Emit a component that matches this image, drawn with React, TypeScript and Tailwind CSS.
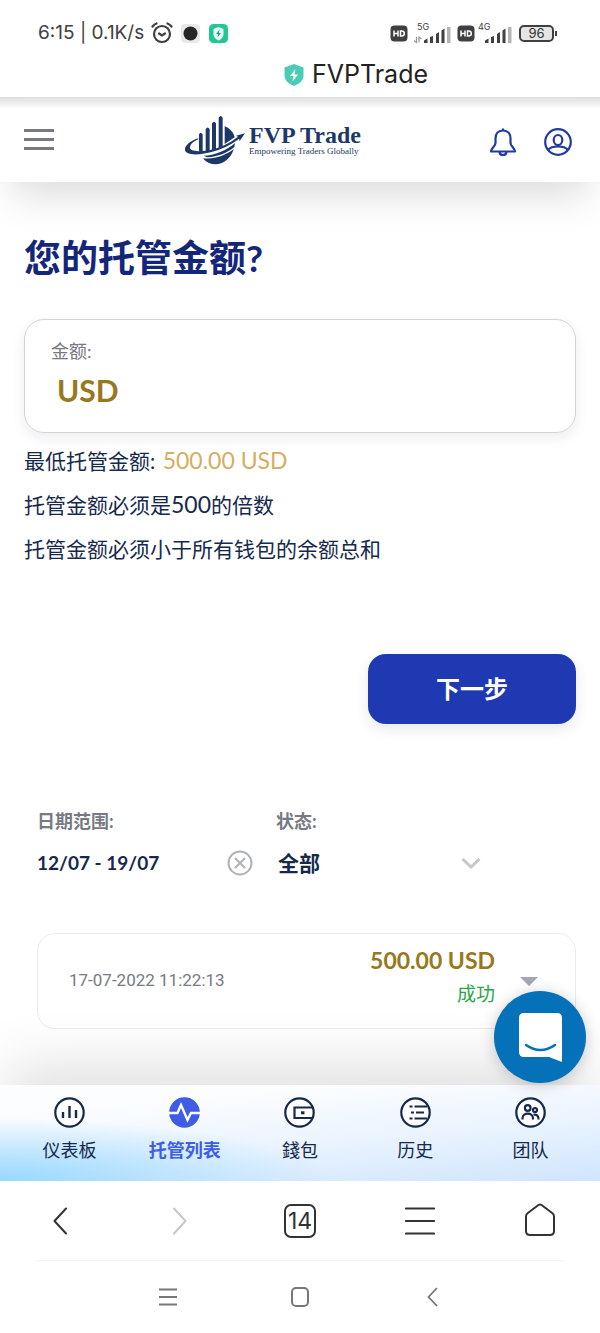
import type { ReactNode } from "react";

const navy = "#16294d";

const HdBadge = () => (
    <svg width="18" height="17" viewBox="0 0 18 17">
        <rect x="0.5" y="0.5" width="17" height="16" rx="4" fill="#404040" />
        <path d="M4 5.5v6M8 5.5v6M4 8.5h4M10.5 6v5h1.2q2.6 0 2.6-2.5T11.7 6z" stroke="#fff" strokeWidth="1.5" fill="none" />
    </svg>
);

const Signal = ({ label, arrows }: { label: string; arrows?: boolean }) => (
    <div className="relative w-[34px] h-[22px]">
        <span className="absolute left-0 top-0 text-[9px] leading-[10px] text-[#404040]">{label}</span>
        <svg className="absolute right-0 bottom-0" width="38" height="17" viewBox="0 0 38 17">
            {arrows && <path d="M3.500 10v5.500l-2.500-2M6 15.500V10l2.500 2" stroke="#999" strokeWidth="1.200" fill="none" />}
            <path d="M11 13.500l3.500-2v4.500H11zM17 10l3-1v7h-3zM23 7l3-2v11h-3zM28.500 3.500l3-2V16h-3z" fill="#404040" />
            <path d="M34 0h3.500v16H34z" fill="#b4b4b4" />
        </svg>
    </div>
);

const StatusBar = () => (
    <div className="flex items-center justify-between pt-5 pl-[38px] pr-[43px] font-['Inter',sans-serif]">
        <div className="flex items-center h-[26px]">
            <span className="text-[19px] leading-[26px] text-[#404040]">6:15 | 0.1K/s</span>
            <svg className="ml-[7px]" width="22" height="22" viewBox="0 0 22 22" fill="none" stroke="#404040" strokeWidth="2.200" strokeLinecap="round">
                <circle cx="11" cy="12" r="8" />
                <path d="M1.500 4.500Q3 2.500 5.500 1.500M20.500 4.500Q19 2.500 16.500 1.500M8 11.500l3 2 3-2" />
            </svg>
            <svg className="ml-2" width="19" height="19" viewBox="0 0 19 19">
                <rect width="19" height="19" rx="4" fill="#e9e9e9" />
                <circle cx="9.500" cy="9.500" r="7" fill="#262626" />
            </svg>
            <svg className="ml-[9px]" width="19" height="19" viewBox="0 0 19 19">
                <rect width="19" height="19" rx="4.500" fill="#23c795" />
                <path d="M9.500 3l5 2v5q0 4-5 6.500q-5-2.500-5-6.500V5z" fill="#e8fff6" />
                <path d="M10.500 5.500l-3.500 4.500h2l-.5 3.500 3.500-4.500h-2z" fill="#23a57d" />
            </svg>
        </div>
        <div className="flex items-center h-[26px]">
            <HdBadge />
            <div className="ml-[9px]"><Signal label="5G" arrows /></div>
            <div className="ml-[6px]"><HdBadge /></div>
            <div className="ml-[3px]"><Signal label="4G" /></div>
            <div className="ml-[7px] flex items-center">
                <div className="w-[35px] h-[17px] rounded-[5px] border-2 border-[#404040] bg-[#e5e5e5] text-center text-[13px] leading-[13px] text-[#303030]">96</div>
                <div className="ml-px w-[2px] h-[5px] bg-[#404040]" />
            </div>
        </div>
    </div>
);

const Logo = () => (
    <a href="#" className="flex items-center text-[#1b3866] mr-[50px]">
        <svg width="60" height="50" viewBox="48 42 180 150" fill="currentColor">
            <path d="M90 100q5-9 11 0v51H90zM110 84q6-9 12 0v66h-12zM129 67q6-9 12 0v78l-12 4zM149 50q6-10 12 0v85l-12 7z" />
            <path d="M167 76c15 6 27 18 30 33l-30 20z" />
            <path d="M88 112c-28 9-42 24-40 36 4 16 44 16 90 2 32-10 58-26 72-37l2 7 16-23-27 7 6 3c-24 19-58 37-98 42-32 4-48-1-46-11 1-8 11-17 25-23z" />
            <path d="M104 164c32 0 70-16 94-38l-2 12c-22 18-48 29-82 31z" />
            <path d="M102 172c34 4 66-8 92-27-8 28-32 45-54 45-16 0-29-6-38-18z" />
        </svg>
        <span className="ml-1 flex flex-col font-['Liberation_Serif',serif]">
            <span className="text-2xl leading-[22px] font-bold">FVP Trade</span>
            <span className="text-[9px] leading-[10px]">Empowering Traders Globally</span>
        </span>
    </a>
);

const Header = () => (
    <header className="relative z-10 grid grid-cols-[1fr_auto_1fr] items-center h-[85px] pl-6 pr-7 bg-white bg-linear-to-b from-[#dedede] to-white to-[12px] shadow-[0_24px_40px_-12px_rgba(0,0,0,0.15)]">
        <button aria-label="菜单" className="flex flex-col gap-[6px] w-[30px]">
            <span className="h-[3px] bg-[#777a82]" />
            <span className="h-[3px] bg-[#777a82]" />
            <span className="h-[3px] bg-[#777a82]" />
        </button>
        <Logo />
        <div className="flex justify-end items-center gap-[27px] pt-1 text-[#203a9f]">
            <button aria-label="通知">
                <svg width="28" height="28" viewBox="0 0 28 28" fill="none" stroke="currentColor" strokeWidth="2.200" strokeLinejoin="round">
                    <path d="M14 .500v3M14 2.500c-5 0-7.500 3.500-7.500 8v4.500c0 3.500-4.500 5-4.500 8.500h24c0-3.500-4.500-5-4.500-8.500v-4.500c0-4.500-2.500-8-7.500-8z" />
                    <path d="M10.500 24c.5 4 6.500 4 7 0" />
                </svg>
            </button>
            <button aria-label="账户">
                <svg width="28" height="28" viewBox="0 0 28 28" fill="none" stroke="currentColor" strokeWidth="2.200">
                    <circle cx="14" cy="14" r="12.800" />
                    <ellipse cx="14" cy="12" rx="4.300" ry="5" />
                    <path d="M4.500 21.500c3-4 16-4 19 0" />
                </svg>
            </button>
        </div>
    </header>
);

const NavItem = ({ label, active, children }: { label: string; active?: boolean; children: ReactNode }) => (
    <a href="#" className={`flex flex-col items-center gap-[9px] pt-3 ${active ? "font-bold text-[#3f5de4]" : "text-[#16294d]"}`}>
        <svg width="31" height="31" viewBox="0 0 31 31" fill="none" stroke="currentColor" strokeWidth="2.200">
            <circle cx="15.500" cy="15.500" r="14.200" fill={active ? "currentColor" : "#fff"} />
            {children}
        </svg>
        <span className="text-[18px] leading-[26px]">{label}</span>
    </a>
);

const BottomNav = () => (
    <nav className="relative z-10 grid grid-cols-5 h-24 px-3 bg-[radial-gradient(ellipse_55%_65%_at_0%_100%,#98d8ff,transparent),linear-gradient(175deg,#fcfdff_20%,#e9f3ff_60%,#cfe5fd)] shadow-[0_-24px_60px_-6px_rgba(0,0,0,0.13)]">
        <NavItem label="仪表板">
            <path d="M9 21v-6M15.500 21V9M22 21v-8" stroke={navy} strokeWidth="2.400" />
        </NavItem>
        <NavItem label="托管列表" active>
            <path d="M0 16h8.500l3.500-8 6.500 15 3.500-7h9" stroke="#fff" strokeWidth="2.400" />
        </NavItem>
        <NavItem label="錢包">
            <path d="M28 10.500H10.500V21H28" />
            <path d="M17 14.300h3.500v3H17z" fill={navy} stroke="none" />
        </NavItem>
        <NavItem label="历史">
            <path d="M9.500 9.500h3M14.500 9.500h12.500M11 15.500h3M16 15.500h8M9.500 21.500h3M14.500 21.500h12.500" />
        </NavItem>
        <NavItem label="团队">
            <circle cx="12.700" cy="11" r="2.800" />
            <circle cx="20" cy="13" r="2" />
            <path d="M7.500 22.500v-1c0-6.500 10.500-6.500 10.500 0v1M18.500 17.800c3-.8 5 1 5 4v.7" />
        </NavItem>
    </nav>
);

const BrowserBar = () => (
    <div className="relative z-10 grid grid-cols-5 items-center justify-items-center h-[79px] bg-white text-[#333]">
        <button aria-label="后退">
            <svg width="14" height="28" viewBox="0 0 14 28" fill="none" stroke="currentColor" strokeWidth="2" strokeLinecap="round" strokeLinejoin="round"><path d="M13 1.500L1.500 14 13 26.500" /></svg>
        </button>
        <button aria-label="前进" className="text-[#c8c8c8]">
            <svg width="14" height="28" viewBox="0 0 14 28" fill="none" stroke="currentColor" strokeWidth="2" strokeLinecap="round" strokeLinejoin="round"><path d="M1 1.500L12.500 14 1 26.500" /></svg>
        </button>
        <button aria-label="标签页" className="w-8 h-[34px] rounded-[7px] border-2 border-[#333] text-[23px] leading-[30px] text-center font-['Inter',sans-serif]">14</button>
        <button aria-label="浏览器菜单">
            <svg width="30" height="28" viewBox="0 0 30 28" stroke="currentColor" strokeWidth="2.200" strokeLinecap="round"><path d="M1 1.500h28M1 14h28M1 26.500h28" /></svg>
        </button>
        <button aria-label="主页">
            <svg width="32" height="36" viewBox="0 0 32 36" fill="none" stroke="currentColor" strokeWidth="2" strokeLinejoin="round"><path d="M2 13.500q0-2 1.500-3.200L14.500 2q1.500-1 3 0l11 8.300Q30 11.500 30 13.500V28q0 4-4 4H6q-4 0-4-4z" /></svg>
        </button>
    </div>
);

const SystemNav = () => (
    <div className="flex justify-center mx-9 h-[73px] border-t border-[#f3f3f3] text-[#777]">
        <div className="grid grid-cols-3 items-center justify-items-center w-[396px]">
            <button aria-label="最近任务">
                <svg width="18" height="18" viewBox="0 0 18 18" stroke="currentColor" strokeWidth="2"><path d="M0 1.500h18M0 9h18M0 16.500h18" /></svg>
            </button>
            <button aria-label="主屏幕">
                <svg width="18" height="20" viewBox="0 0 18 20" fill="none" stroke="currentColor" strokeWidth="2"><rect x="1" y="1" width="16" height="18" rx="4" /></svg>
            </button>
            <button aria-label="返回">
                <svg width="11" height="20" viewBox="0 0 11 20" fill="none" stroke="currentColor" strokeWidth="1.800"><path d="M10 1L1.500 10 10 19" /></svg>
            </button>
        </div>
    </div>
);

export default function App() {
    return (
        <div className="w-full bg-white font-['Lato','Noto_Sans_CJK_SC',sans-serif] text-[#16294d]">
            <StatusBar />
            <div className="flex items-center justify-center gap-2 h-[34px] mt-3 mb-[5px] pl-28 font-['Inter',sans-serif] text-[25px] text-[#222]">
                <svg width="20" height="22" viewBox="0 0 20 22">
                    <path d="M10 0l9.500 3.500V12q0 6-9.500 10Q.5 18 .5 12V3.500z" fill="#4accb6" />
                    <path d="M11.500 5L6 12h3.500l-1 5.500L14 10.500h-3.500z" fill="#fff" />
                </svg>
                <span>FVPTrade</span>
            </div>
            <Header />

            <main className="relative px-6 pt-12 pb-[56px]">
                <h1 className="text-[37px] leading-[56px] font-bold text-[#14267a]">您的托管金额?</h1>

                <div className="mt-[33px] h-[114px] rounded-[20px] border border-[#d3d3d8] px-[26px] pt-[18px] shadow-[0_5px_14px_rgba(30,30,60,0.08)]">
                    <label htmlFor="amount" className="block text-[18px] leading-[26px] text-[#777a82]">金额:</label>
                    <input id="amount" defaultValue="USD" className="block w-full px-[6px] mt-[6px] h-10 text-[30px] font-bold text-[#98781c] outline-none" />
                </div>

                <div className="flex flex-col gap-px mt-[6px] text-[21px] leading-[43px]">
                    <p>最低托管金额: <span className="ml-[2px] text-[23px] text-[#d6ac61]">500.00 USD</span></p>
                    <p>托管金额必须是<span className="text-[23px]">500</span>的倍数</p>
                    <p>托管金额必须小于所有钱包的余额总和</p>
                </div>

                <div className="flex justify-end mt-[84px]">
                    <button className="w-[208px] h-[70px] rounded-[18px] bg-[#1e39b2] text-2xl font-bold text-white shadow-[0_5px_14px_rgba(30,30,60,0.1)]">下一步</button>
                </div>

                <div className="flex pl-[13px] mt-[84px]">
                    <div className="w-[239px]">
                        <label htmlFor="range" className="block text-[18px] leading-[26px] font-bold text-[#777a82]">日期范围:</label>
                        <div className="flex items-center h-[38px] mt-[10px]">
                            <input id="range" defaultValue="12/07 - 19/07" className="flex-1 min-w-0 text-[19px] font-bold outline-none" />
                            <button aria-label="清除" className="mr-[23px]">
                                <svg width="26" height="26" viewBox="0 0 26 26" fill="none" stroke="#b0b2b8" strokeWidth="2"><circle cx="13" cy="13" r="11.500" /><path d="M8 8l10 10M18 8L8 18" /></svg>
                            </button>
                        </div>
                    </div>
                    <div className="w-[205px]">
                        <label htmlFor="state" className="block text-[18px] leading-[26px] font-bold text-[#777a82]">状态:</label>
                        <div className="relative flex items-center h-[38px] mt-[10px]">
                            <select id="state" className="appearance-none w-full pl-[2px] text-[21px] leading-[38px] font-bold bg-transparent outline-none">
                                <option>全部</option>
                            </select>
                            <svg className="absolute right-0 pointer-events-none" width="20" height="12" viewBox="0 0 20 12" fill="none" stroke="#c8c8c8" strokeWidth="3"><path d="M1.500 2L10 10l8.500-8" /></svg>
                        </div>
                    </div>
                </div>

                <div className="flex items-center ml-[13px] mt-[51px] h-24 rounded-[18px] border border-[#ececee] pl-[31px] pr-[37px]">
                    <span className="flex-1 font-['Roboto',sans-serif] text-[17px] text-[#777a82]">17-07-2022 11:22:13</span>
                    <div className="text-right">
                        <div className="text-[23px] leading-[34px] font-bold text-[#98781c]">500.00 USD</div>
                        <div className="text-[19px] leading-[34px] pb-2 text-[#28a745]">成功</div>
                    </div>
                    <svg className="ml-[25px]" width="18" height="9" viewBox="0 0 18 9"><path d="M0 0h18L9 9z" fill="#a3a6b4" /></svg>
                </div>
            </main>

            <div className="relative z-20">
                <button aria-label="客服" className="absolute right-[14px] bottom-[2px] w-[92px] h-[92px] rounded-full bg-[#0571b8] shadow-[0_2px_16px_rgba(0,0,0,0.2)] flex items-center justify-center">
                    <svg width="43" height="49" viewBox="0 0 43 49">
                        <path d="M5 0h33q5 0 5 5v44l-13-5H5q-5 0-5-5V5q0-5 5-5z" fill="#fff" />
                        <path d="M7 32q14.500 10 29 0" stroke="#0571b8" strokeWidth="2.600" strokeLinecap="round" fill="none" />
                    </svg>
                </button>
            </div>
            <BottomNav />
            <BrowserBar />
            <SystemNav />
        </div>
    );
}
